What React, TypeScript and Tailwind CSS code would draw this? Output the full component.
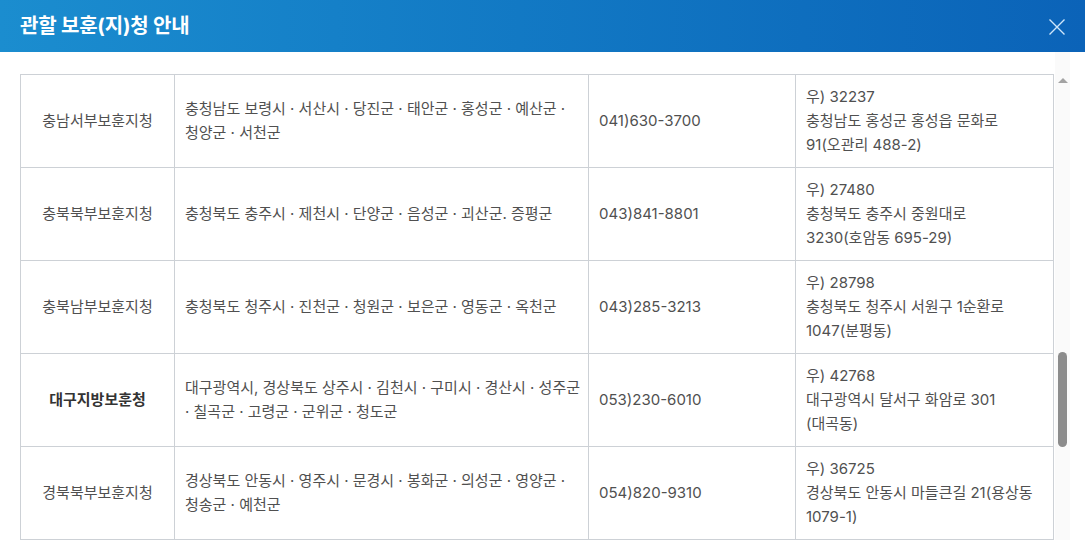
/** 관할 보훈(지)청 안내 — modal body scrolled to the 충남/충북/대구/경북 rows. */

type Office = {
  name: string;
  area: string;
  tel: string;
  zip: string;
  addr: string;
  bold?: boolean;
};

const offices: Office[] = [
  {
    name: '충남서부보훈지청',
    area: '충청남도 보령시 · 서산시 · 당진군 · 태안군 · 홍성군 · 예산군 · 청양군 · 서천군',
    tel: '041)630-3700',
    zip: '32237',
    addr: '충청남도 홍성군 홍성읍 문화로 91(오관리 488-2)',
  },
  {
    name: '충북북부보훈지청',
    area: '충청북도 충주시 · 제천시 · 단양군 · 음성군 · 괴산군. 증평군',
    tel: '043)841-8801',
    zip: '27480',
    addr: '충청북도 충주시 중원대로 3230(호암동 695-29)',
  },
  {
    name: '충북남부보훈지청',
    area: '충청북도 청주시 · 진천군 · 청원군 · 보은군 · 영동군 · 옥천군',
    tel: '043)285-3213',
    zip: '28798',
    addr: '충청북도 청주시 서원구 1순환로 1047(분평동)',
  },
  {
    name: '대구지방보훈청',
    area: '대구광역시, 경상북도 상주시 · 김천시 · 구미시 · 경산시 · 성주군 · 칠곡군 · 고령군 · 군위군 · 청도군',
    tel: '053)230-6010',
    zip: '42768',
    addr: '대구광역시 달서구 화암로 301 (대곡동)',
    bold: true,
  },
  {
    name: '경북북부보훈지청',
    area: '경상북도 안동시 · 영주시 · 문경시 · 봉화군 · 의성군 · 영양군 · 청송군 · 예천군',
    tel: '054)820-9310',
    zip: '36725',
    addr: '경상북도 안동시 마들큰길 21(용상동 1079-1)',
  },
];

const font = "font-['Inter','Noto_Sans_CJK_KR',sans-serif]";

function CloseIcon() {
  return (
    <svg width="18" height="18" viewBox="0 0 18 18" fill="none" stroke="#cfe6fa" strokeWidth="1.4">
      <path d="M1.5 1.5 16.5 16.5M16.5 1.5 1.5 16.5" />
    </svg>
  );
}

export default function App() {
  return (
    <div className={`flex h-[540px] w-[1085px] flex-col overflow-hidden bg-white ${font}`}>
      <header className="flex h-[52px] shrink-0 items-center justify-between bg-linear-to-r from-[#1b8dcf] to-[#0b63b8] pl-[20px] pr-[19px]">
        <h1 className="text-[20px] font-bold tracking-[-0.2px] text-white">관할 보훈(지)청 안내</h1>
        <button type="button" aria-label="닫기" className="mt-[1px]">
          <CloseIcon />
        </button>
      </header>

      <div className="flex min-h-0 flex-1">
        <div className="w-[1054px] shrink-0 pl-[20px] pt-[22px]">
          <div className="grid grid-cols-[153px_413px_206px_257px] gap-px border border-[#cdd1d6] bg-[#cdd1d6] text-[15px] leading-[24px] text-[#505050] break-keep">
            {offices.map((o) => (
              <Row key={o.name} office={o} />
            ))}
          </div>
        </div>

        {/* scrollbar */}
        <div className="ml-[1px] flex w-[15px] shrink-0 flex-col items-center bg-[#fafafa]">
          <div className="mt-[26px] h-0 w-0 border-x-[5px] border-b-[5px] border-x-transparent border-b-[#a3a3a3]" />
          <div className="mt-[269px] h-[95px] w-[9px] rounded-full bg-[#8c8c8c]" />
        </div>
      </div>
    </div>
  );
}

function Row({ office }: { office: Office }) {
  return (
    <>
      <div
        className={`flex h-[92px] items-center justify-center bg-white text-center ${
          office.bold ? 'font-bold text-[#333]' : ''
        }`}
      >
        {office.name}
      </div>
      <div className="flex items-center bg-white pl-[10px] pr-[5px]">
        <p>{office.area}</p>
      </div>
      <div className="flex items-center bg-white px-[10px]">{office.tel}</div>
      <div className="flex items-center bg-white pl-[10px] pr-[10px]">
        <p>
          우) {office.zip}
          <br />
          {office.addr}
        </p>
      </div>
    </>
  );
}
